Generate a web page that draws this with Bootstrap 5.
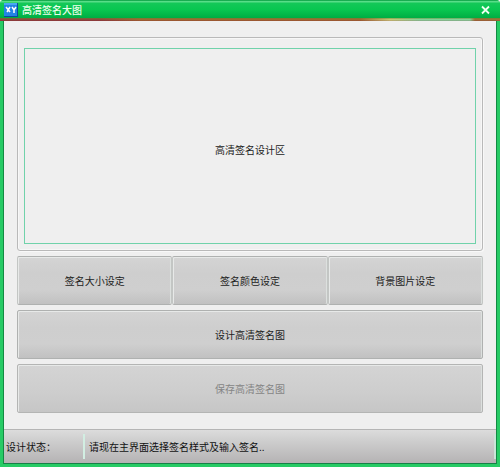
<!DOCTYPE html>
<html lang="zh-CN">
<head>
<meta charset="utf-8">
<meta name="viewport" content="width=device-width, initial-scale=1">
<title>高清签名大图</title>
<link href="https://cdn.jsdelivr.net/npm/bootstrap@5.3.0/dist/css/bootstrap.min.css" rel="stylesheet">
<style>
body{font:10px/16px "Noto Sans CJK SC",sans-serif;color:#222;background:#efefef}
.app-window{border:solid #27cb65;border-width:0 3px 3px;border-radius:4px 4px 0 0;background:#efefef;box-shadow:inset 1px 0 #138a43,inset -1px 0 #138a43,inset 0 -1px #168047}
.title-bar{height:18px;margin:0 -3px;padding:2px 8px 0 4px;border-radius:4px 4px 0 0;background:linear-gradient(#18ad50 0 1px,#58dd88 1px 2px,#14c858 3px,#08c650 10px,#00ad43);color:#eaffec}
.title-bar h1{font-size:10px;line-height:16px;font-weight:500}
.color-strip{height:3px;margin:0 -3px;background:linear-gradient(#5c862faa,#fff0 2px,#70302c88),linear-gradient(90deg,#963d40 0 20%,#aa6532 28% 72%,#d8d884 78%,#8be3ac 84% 94%,#a9703a 95%)}
.close-btn{width:12px;height:14px;color:#effff0}
.close-btn:hover{color:#fff}
.work-area{padding:16px 14px 16px}
.preview-frame{padding:10px 6px 6px;border:1px solid #b9b9b9;border-radius:3px;box-shadow:inset 0 0 0 1px #f7f7f7,1px 1px #f8f8f8}
.preview{border:1px solid #70d2aa}
.tool-btn{height:49px;font-size:10px;line-height:16px;color:#222;border:1px solid #afb1b0;border-radius:2px;background:linear-gradient(#d4d4d4,#cecece 35%,#cfcfcf 70%,#c1c1c1);box-shadow:inset 1px 1px #e7e9e8,inset -1px 0 #dce0de}
.tool-group .tool-btn{border-left-color:#c3c6c4;border-right-color:#c3c6c4}
.tool-btn:hover{color:#111;background:#d6d6d6;border-color:#a5a7a6}
.tool-btn:disabled{color:#858585;border-color:#b4b5b4;opacity:1;background:linear-gradient(#d4d4d4,#cdcdcd 60%,#c6c6c6)}
.stack{gap:5px}
.status-bar{height:34px;margin:0 1px 1px;border-top:1px solid #b5b5b5;background:linear-gradient(#dcdcdc,#cfcfcf 30%,#b5b3b4);color:#111}
.status-label{width:81px;padding-left:2px;border-right:2px solid #d2eee2}
.status-text{padding-left:4px;border-right:2px solid #c9e5d8}
</style>
<script src="https://cdn.jsdelivr.net/npm/bootstrap@5.3.0/dist/js/bootstrap.bundle.min.js"></script>
</head>
<body>
<div class="app-window min-vh-100 d-flex flex-column">
  <header class="title-bar d-flex align-items-center">
    <svg width="14" height="14" viewBox="0 0 14 14" aria-hidden="true"><path fill="#0b4a9c" d="M0 0h14v14H0z"/><path fill="#2384e5" d="M0 0h13v13H0z"/><path fill="#48a6f3" d="M0 0h13v2H0z"/><path d="M2 4l4 5M6 4L3 9M8 4l2 3 2-3M10 7v3" fill="none" stroke="#fff" stroke-width="1.5"/></svg>
    <h1 class="mb-0 ms-1">高清签名大图</h1>
    <button type="button" class="close-btn btn p-0 border-0 ms-auto d-flex align-items-center justify-content-center" aria-label="关闭"><svg width="10" height="10" viewBox="0 0 10 10" aria-hidden="true"><path d="M1 1.5l7 7M8 1.5l-7 7" fill="none" stroke="currentColor" stroke-width="1.8"/></svg></button>
  </header>
  <div class="color-strip"></div>
  <main class="work-area d-flex flex-column flex-grow-1 stack">
    <section class="preview-frame flex-grow-1 d-flex"><div class="preview flex-grow-1 d-flex align-items-center justify-content-center pt-2">高清签名设计区</div></section>
    <div class="tool-group row g-0">
      <div class="col"><button type="button" class="tool-btn btn w-100">签名大小设定</button></div>
      <div class="col"><button type="button" class="tool-btn btn w-100">签名颜色设定</button></div>
      <div class="col"><button type="button" class="tool-btn btn w-100">背景图片设定</button></div>
    </div>
    <button type="button" class="tool-btn btn w-100">设计高清签名图</button>
    <button type="button" class="tool-btn btn w-100" disabled>保存高清签名图</button>
  </main>
  <footer class="status-bar d-flex align-items-stretch py-1">
    <div class="status-label d-flex align-items-center">设计状态：</div>
    <div class="status-text flex-grow-1 d-flex align-items-center">请现在主界面选择签名样式及输入签名..</div>
  </footer>
</div>
</body>
</html>
